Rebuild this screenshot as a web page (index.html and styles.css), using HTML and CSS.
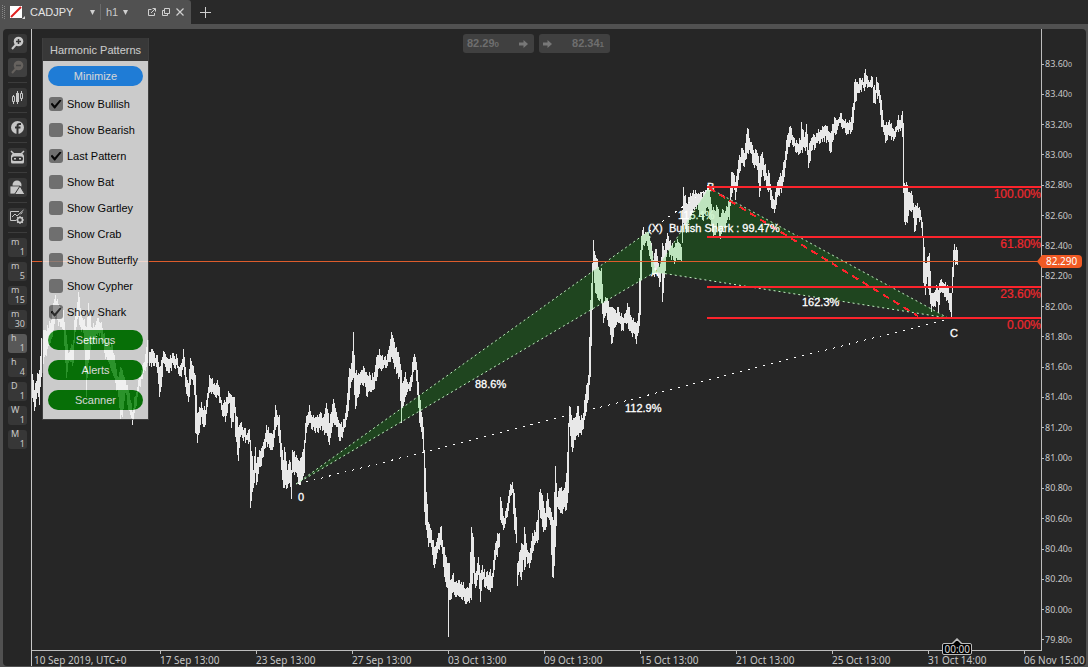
FILE: index.html
```html
<!DOCTYPE html>
<html lang="en">
<head>
<meta charset="utf-8">
<title>CADJPY h1</title>
<link rel="stylesheet" href="styles.css">
</head>
<body>
<header class="tabbar">
  <div class="tab">
    <svg class="grip" width="4" height="14" viewBox="0 0 4 14"><path d="M.5 0v14M2.5 1v14" stroke="#8a8a8a" stroke-dasharray="1 1"/></svg>
    <svg class="logo" width="16" height="16" viewBox="0 0 16 16"><path fill="#fff" d="M0 2h12v12H0z"/><path d="M1 13L11 3" stroke="#e02020" stroke-width="2"/><path fill="#ddd" d="M15 12v3h-3z"/></svg>
    <button class="pick symbol">CADJPY</button>
    <svg width="5" height="5" viewBox="0 0 5 5"><path fill="#d0d0d0" d="M0 0h5L2.5 5z"/></svg>
    <span class="tab-sep"></span>
    <button class="pick period">h1</button>
    <svg width="5" height="5" viewBox="0 0 5 5"><path fill="#d0d0d0" d="M0 0h5L2.5 5z"/></svg>
    <div class="tab-icons">
      <button class="mini" aria-label="Detach"><svg width="8" height="8" viewBox="0 0 8 8"><path fill="none" stroke="#d0d0d0" d="M3.5 1.500H.5v6h6V5M3 5l4-4M4.500.500h3v3"/></svg></button>
      <button class="mini" aria-label="Duplicate"><svg width="8" height="8" viewBox="0 0 8 8"><path fill="none" stroke="#d0d0d0" d="M2.500.5h5v5h-5zM2 2.500H.5v5h5V6"/></svg></button>
      <button class="mini" aria-label="Close"><svg width="8" height="8" viewBox="0 0 8 8"><path stroke="#d0d0d0" stroke-width="1.200" d="M.5.5l7 7M7.500.500l-7 7"/></svg></button>
    </div>
  </div>
  <button class="mini add" aria-label="New tab"><svg width="11" height="11" viewBox="0 0 11 11"><path stroke="#d0d0d0" d="M5.500 0v11M0 5.500h11"/></svg></button>
</header>

<main class="workspace">
  <nav class="tools">
    <button class="tool" aria-label="Zoom in"><svg viewBox="0 0 19 19"><circle cx="10.500" cy="7.500" r="4.800" fill="#c8c8c8"/><path stroke="#c8c8c8" stroke-width="2" d="M8 10.500L4 15"/><path stroke="#333" stroke-width="1.500" d="M8 7.500h5M10.500 5v5"/></svg></button>
    <button class="tool" disabled aria-label="Zoom out"><svg viewBox="0 0 19 19"><circle cx="10.500" cy="7.500" r="4.800" fill="#66625e"/><path stroke="#66625e" stroke-width="2" d="M8 10.500L4 15"/><path stroke="#444" stroke-width="1.500" d="M8 7.500h5"/></svg></button>
    <hr>
    <button class="tool" aria-label="Chart type"><svg viewBox="0 0 19 19"><path fill="none" stroke="#c8c8c8" d="M4.500 8.500h2v5h-2zM5.500 7v1.500M5.500 13.500V16M12.500 5.500h2v5h-2zM13.500 3v2.500M13.500 10.500V13M9.500 3v13"/><path fill="#c8c8c8" d="M8 5h3v9H8z"/></svg></button>
    <hr>
    <button class="tool" aria-label="Facebook"><svg viewBox="0 0 19 19"><circle cx="9.500" cy="9.500" r="6.500" fill="#c8c8c8"/><path fill="none" stroke="#333" stroke-width="2" d="M13 6h-1.500Q9.500 6 9.500 8v8M7 9.500h5.500"/></svg></button>
    <hr>
    <button class="tool" aria-label="Robots"><svg viewBox="0 0 19 19"><path stroke="#c8c8c8" stroke-width="1.500" d="M3 3l3 3M16 3l-3 3"/><path fill="#c8c8c8" d="M3 8q1-3 4-3h5q3 0 4 3v6q0 1.500-1.500 1.500h-10Q3 15.500 3 14z"/><rect x="4" y="8.500" width="11" height="4.500" rx="2" fill="#333"/><path fill="#c8c8c8" d="M6 10h2v1.500H6zM11 10h2v1.500h-2z"/></svg></button>
    <hr>
    <button class="tool" aria-label="Objects"><svg viewBox="0 0 19 19"><circle cx="9" cy="7" r="4.500" fill="#c8c8c8"/><path fill="#c8c8c8" stroke="#373737" stroke-width=".8" d="M2 8h10v8H2z"/><path fill="#c8c8c8" stroke="#373737" stroke-width="1" d="M12 8L17 16.500H6.500z"/></svg></button>
    <hr>
    <button class="tool" aria-label="Indicators"><svg viewBox="0 0 19 19"><path fill="none" stroke="#c8c8c8" d="M11 3.500H2.500v9H8M4 9l3-3 2 2 6.500-6M12.500 6l2-1.500"/><circle cx="12" cy="12" r="2.500" fill="none" stroke="#c8c8c8" stroke-width="1.500"/><path stroke="#c8c8c8" stroke-width="1.200" d="M12 8v1.500M12 14.500V16M8 12h1.500M14.500 12H16M9.200 9.200l1 1M13.800 13.800l1 1M14.800 9.200l-1 1M10.200 13.800l-1 1"/></svg></button>
    <hr>
    <button class="tool frame"><span>m</span><b>1</b></button>
    <button class="tool frame"><span>m</span><b>5</b></button>
    <button class="tool frame"><span>m</span><b>15</b></button>
    <button class="tool frame"><span>m</span><b>30</b></button>
    <button class="tool frame current"><span>h</span><b>1</b></button>
    <button class="tool frame"><span>h</span><b>4</b></button>
    <button class="tool frame"><span>D</span><b>1</b></button>
    <button class="tool frame"><span>W</span><b>1</b></button>
    <button class="tool frame"><span>M</span><b>1</b></button>
  </nav>

  <section class="chart">
    <div class="plot">
      <svg class="canvas" viewBox="32 29 1009 621">
        <path id="bars" class="bars"/>
        <g class="note">
          <text x="678" y="219">115.4%</text>
          <text x="651" y="276">A</text>
          <text x="707" y="191">B</text>
        </g>
        <path class="zone" d="M296 484L649 231L655 272ZM655 272L709 188L948 318Z"/>
        <path class="edge" d="M296 484L649 231M296 484L655 272M649 231L655 272M655 272L709 188L948 318M655 272L948 318"/>
        <path class="link" d="M298 484L948 319M649 231L709 188"/>
        <path class="trend" d="M709 188L918 316"/>
        <path class="level" d="M707 187H1041M707 237H1041M707 287H1041M707 318H1041"/>
        <path class="bid" d="M32 261.500H1041"/>
        <g class="ratio">
          <text x="1041" y="198">100.00%</text>
          <text x="1041" y="248">61.80%</text>
          <text x="1041" y="298">23.60%</text>
          <text x="1041" y="329">0.00%</text>
        </g>
        <g class="note">
          <text x="298" y="501">0</text>
          <text x="475" y="388">88.6%</text>
          <text x="625" y="412">112.9%</text>
          <text x="802" y="306">162.3%</text>
          <text x="950" y="337">C</text>
          <text x="648" y="232">(X)</text>
          <text x="669" y="232">Bullish Shark : 99.47%</text>
        </g>
      </svg>

      <div class="quotes">
        <button class="quote"><span>82.29<small>0</small></span><svg width="9" height="8" viewBox="0 0 9 8"><path fill="#777" d="M0 2.500h4.500V0L9 4 4.500 8V5.500H0z"/></svg></button>
        <button class="quote"><svg width="9" height="8" viewBox="0 0 9 8"><path fill="#777" d="M0 2.500h4.500V0L9 4 4.500 8V5.500H0z"/></svg><span>82.34<small>1</small></span></button>
      </div>

      <aside class="panel">
        <h2>Harmonic Patterns</h2>
        <div class="panel-body">
          <button class="pill blue">Minimize</button>
          <div class="options">
            <label><input type="checkbox" checked>Show Bullish</label>
            <label><input type="checkbox">Show Bearish</label>
            <label><input type="checkbox" checked>Last Pattern</label>
            <label><input type="checkbox">Show Bat</label>
            <label><input type="checkbox">Show Gartley</label>
            <label><input type="checkbox">Show Crab</label>
            <label><input type="checkbox">Show Butterfly</label>
            <label><input type="checkbox">Show Cypher</label>
            <label><input type="checkbox" checked>Show Shark</label>
          </div>
          <div class="actions">
            <button class="pill">Settings</button>
            <button class="pill">Alerts</button>
            <button class="pill">Scanner</button>
          </div>
        </div>
      </aside>
      <div class="clock">
        <svg width="14" height="6" viewBox="0 0 14 6"><path fill="#000" stroke="#bdbdbd" stroke-width="1.500" d="M0 6h2l5-5 5 5h2"/></svg>
        <span>00:00</span>
      </div>
    </div>

    <div class="prices">
      <span>83.60<small>0</small></span><span>83.40<small>0</small></span><span>83.20<small>0</small></span><span>83.00<small>0</small></span><span>82.80<small>0</small></span><span>82.60<small>0</small></span><span>82.40<small>0</small></span><span>82.20<small>0</small></span><span>82.00<small>0</small></span><span>81.80<small>0</small></span><span>81.60<small>0</small></span><span>81.40<small>0</small></span><span>81.20<small>0</small></span><span>81.00<small>0</small></span><span>80.80<small>0</small></span><span>80.60<small>0</small></span><span>80.40<small>0</small></span><span>80.20<small>0</small></span><span>80.00<small>0</small></span><span>79.80<small>0</small></span>
      <strong class="last">82.290</strong>
    </div>

    <div class="times">
      <span>10 Sep 2019, UTC+0</span><span>17 Sep 13:00</span><span>23 Sep 13:00</span><span>27 Sep 13:00</span><span>03 Oct 13:00</span><span>09 Oct 13:00</span><span>15 Oct 13:00</span><span>21 Oct 13:00</span><span>25 Oct 13:00</span><span>31 Oct 14:00</span><span>06 Nov 15:00</span>
    </div>
  </section>
</main>
<script src="chart.js"></script>
</body>
</html>
```
FILE: styles.css
```css
* { box-sizing: border-box; }

body {
  margin: 0;
  min-height: 100vh;
  display: flex;
  flex-direction: column;
  background: #515151;
  color: #c8c8c8;
  font: 11px/13px "Liberation Sans", Arial, sans-serif;
  overflow: hidden;
}

button {
  border: 0;
  padding: 0;
  background: none;
  color: inherit;
  font: inherit;
}

svg { display: block; flex: none; }

.tabbar {
  display: flex;
  align-items: center;
  height: 24px;
  margin-bottom: 5px;
  background: #292929;
}

.tab {
  display: flex;
  align-items: center;
  width: 191px;
  height: 24px;
  padding-left: 2px;
  background: #515151;
  border-radius: 0 3px 0 0;
}

.logo { margin: 0 4px; }
.symbol { width: 60px; text-align: left; color: #e4e4e4; }
.tab-sep { width: 1px; height: 16px; margin: 0 5px; background: #6a6a6a; }
.period { width: 17px; text-align: left; }
.tab-icons { display: flex; gap: 6px; margin-left: 20px; }
.mini { display: block; }
.add { margin-left: 9px; }

.workspace {
  flex: 1;
  display: grid;
  grid-template-columns: 28px minmax(0, 1fr);
  margin: 0 2px 1px 3px;
  background: #262626;
  border-radius: 4px;
}

.tools {
  display: flex;
  flex-direction: column;
  align-items: flex-start;
  gap: 5px;
  padding: 5px 0 0 5px;
}

.tools hr {
  width: 19px;
  height: 1px;
  margin: 0;
  border: 0;
  background: #3c3c3c;
}

.tool {
  width: 19px;
  height: 19px;
  border-radius: 3px;
  background: #373737;
}

.tool:disabled { background: #404040; }

.frame {
  display: flex;
  flex-direction: column;
  justify-content: space-between;
  padding: 0 2px 1px 3px;
  font: 9px/8px "Noto Sans", sans-serif;
}

.frame span { align-self: flex-start; }
.frame b { align-self: flex-end; font-weight: 400; }
.current { background: #585858; }

.chart {
  display: grid;
  grid-template-columns: minmax(0, 1fr) 44px;
  grid-template-rows: auto 1fr;
  border-left: 1px solid #c8c8c8;
}

.plot {
  position: relative;
  border-right: 1px solid #bdbdbd;
  border-bottom: 1px solid #bdbdbd;
}

.canvas { width: 100%; height: auto; }

.bars { stroke: #e8e8e8; fill: none; shape-rendering: crispEdges; }
.zone { fill: #00d000; fill-opacity: .18; }
.edge { fill: none; stroke: #c4f4c4; stroke-dasharray: 2 3; }
.link { fill: none; stroke: #fff; stroke-dasharray: 2 6; shape-rendering: crispEdges; }
.trend { stroke: #fc242c; stroke-width: 2; stroke-dasharray: 7 5; shape-rendering: crispEdges; }
.level { stroke: #fc242c; stroke-width: 2; }
.bid { stroke: #dd5c2c; }
.note { fill: #fff; stroke: #fff; stroke-width: .3; }
.ratio { fill: #f0262e; stroke: #f0262e; stroke-width: .2; font-size: 12px; text-anchor: end; }

.quotes {
  position: absolute;
  top: 5px;
  left: 0;
  right: 0;
  display: flex;
  justify-content: center;
  gap: 5px;
}

.quote {
  display: flex;
  align-items: center;
  justify-content: space-between;
  width: 71px;
  height: 19px;
  padding: 0 6px 0 4px;
  border-radius: 3px;
  background: #404040;
  color: #6e6e6e;
  font-weight: 700;
}

.quote small { font-size: 8px; }

.panel {
  position: absolute;
  top: 9px;
  left: 10px;
  width: 107px;
  border: 1px solid #454545;
  border-top: 0;
  color: #000;
  opacity: .81;
}

.panel h2 {
  margin: 0;
  height: 23px;
  background: #3d3d3d;
  color: #f2f2f2;
  font: 11px/24px "Liberation Sans", Arial, sans-serif;
  text-align: center;
}

.panel-body { padding: 5px 5px 9px; background: #f2f2f2; }

.pill {
  width: 100%;
  height: 20px;
  border-radius: 10px;
  background: #008000;
  color: #fff;
}

.blue { background: #1e90ff; }

.options { display: flex; flex-direction: column; gap: 12px; padding: 11px 1px; }

.options label { display: flex; align-items: center; gap: 4px; height: 14px; white-space: nowrap; }

.options input {
  appearance: none;
  display: grid;
  place-items: center;
  width: 14px;
  height: 14px;
  margin: 0;
  border-radius: 3px;
  background: #808080;
}

.options input:checked::before {
  content: "";
  width: 11px;
  height: 9px;
  background: #000;
  clip-path: polygon(0 50%, 15% 36%, 38% 66%, 86% 0, 100% 10%, 42% 100%, 34% 100%);
}

.actions { display: flex; flex-direction: column; gap: 10px; }

.clock {
  position: absolute;
  bottom: -5px;
  left: 91.700%;
  display: flex;
  flex-direction: column;
  align-items: center;
  transform: translateX(-50%);
}

.clock svg { position: relative; z-index: 1; margin-bottom: -1px; }

.clock span {
  width: 30px;
  border: 1px solid #bdbdbd;
  border-radius: 2px;
  background: #000;
  color: #d8d8d8;
  font: 10px/10px "Noto Sans", sans-serif;
  text-align: center;
}

.prices {
  position: relative;
  display: flex;
  flex-direction: column;
  justify-content: space-between;
  padding: 28px 0 4px;
  font: 9px/13px "Noto Sans", sans-serif;
}

.prices span { display: flex; align-items: baseline; }
.prices span::before { content: ""; width: 2px; height: 1px; margin-right: 1px; background: #bdbdbd; align-self: center; }
.prices small { font-size: 7px; }

.last {
  position: absolute;
  top: 226px;
  left: -5px;
  width: 45px;
  padding-left: 9px;
  background: #f15a24;
  color: #fff;
  font: 10px/13px "Noto Sans", sans-serif;
  border-radius: 0 4px 4px 0;
  clip-path: polygon(0 50%, 5px 0, 100% 0, 100% 100%, 5px 100%);
}

.times {
  grid-column: 1 / -1;
  display: grid;
  grid-template-columns: minmax(0, 128fr) repeat(9, minmax(0, 96fr)) minmax(0, 62fr);
  font: 10px/11px "Noto Sans", sans-serif;
  white-space: nowrap;
}

.times span {
  padding-top: 4px;
  background: linear-gradient(#bdbdbd, #bdbdbd) 0 0 / 1px 3px no-repeat;
}

.times span:first-child { padding-left: 2px; background: none; }
```
FILE: chart.js
```js
// Price bars as "x high low" in canvas units; columns between entries are interpolated.
const samples = `32 374 398,34 390 411,37 373 393,39 370 405,41 338 377,44 330 357,50 323 343,53 303 330,55 295 317,
60 308 327,63 310 330,66 335 378,68 353 363,73 340 363,74 320 343,76 310 327,78 292 317,80 308 327,83 320 333,86 327 397,
88 303 363,91 327 343,94 327 340,98 318 333,102 328 340,104 333 353,107 343 360,112 345 373,115 363 383,118 377 397,
120 367 419,122 370 417,125 380 393,128 390 410,131 403 418,132 412 425,134 397 413,137 387 397,140 377 387,143 363 373,
146 347 367,148 340 363,149 352 366,153 351 366,156 355 367,159 367 397,162 357 377,163 351 363,167 358 371,173 353 365,
177 358 368,179 367 376,181 363 377,183 349 367,185 367 387,187 380 396,188 383 402,190 358 385,192 365 380,194 373 395,
195 375 433,197 413 443,199 407 433,201 402 417,203 410 427,205 410 425,207 393 407,209 375 393,212 378 392,214 383 395,
217 380 395,219 387 403,221 400 410,223 403 417,225 402 422,227 397 413,229 393 403,231 395 428,234 397 413,235 407 437,
238 427 461,240 423 437,243 430 441,247 433 440,249 429 442,250 440 508,253 470 488,255 447 473,256 463 485,259 450 467,
263 442 457,266 425 442,269 433 448,273 430 447,275 405 430,277 415 425,279 415 443,281 443 470,283 460 488,284 447 488,
287 470 488,289 460 483,291 470 499,292 450 473,295 457 472,298 460 483,301 457 481,304 440 473,305 423 443,307 415 427,
309 405 423,312 417 430,317 415 432,320 412 430,323 417 430,326 403 433,329 423 445,333 399 423,337 417 427,339 423 441,
342 427 438,345 413 427,347 393 417,349 368 400,351 363 382,353 332 378,355 373 409,358 373 397,361 370 383,364 368 383,
367 375 397,370 375 392,373 377 390,377 355 377,379 349 368,383 360 368,386 360 368,388 350 362,391 332 357,393 338 363,
397 352 373,399 357 377,401 370 423,402 383 408,405 372 397,407 382 392,411 375 387,413 357 372,415 357 370,417 370 395,
419 395 423,421 412 432,423 427 453,424 450 512,426 492 530,428 522 547,430 528 543,432 540 555,434 547 568,437 538 553,
439 533 550,441 526 547,443 547 567,446 557 587,447 563 588,448 563 637,449 563 600,450 580 600,452 575 593,457 583 595,
462 585 600,467 587 602,469 583 603,471 527 600,473 537 573,475 573 588,478 557 575,480 573 602,482 565 580,485 577 588,
489 572 590,492 573 588,493 560 577,495 543 560,497 533 557,499 533 547,500 497 520,502 508 525,504 518 528,507 503 517,
509 490 503,511 485 495,512 482 493,514 493 530,516 517 543,517 563 586,519 552 572,521 543 580,523 545 560,524 527 570,
526 543 557,529 553 568,532 533 553,535 532 543,538 510 540,539 492 510,542 495 527,545 513 530,547 493 517,550 508 525,
552 517 577,553 520 578,555 466 547,557 497 507,561 487 513,564 488 507,566 473 510,568 423 493,569 406 427,572 420 452,
575 417 440,578 406 437,580 420 433,582 418 430,584 400 420,586 385 412,588 375 400,590 300 377,592 263 310,593 240 270,
595 255 293,598 267 300,601 268 303,603 303 323,606 298 313,609 307 327,611 307 344,615 310 327,618 307 323,622 317 330,
625 313 323,627 303 323,631 317 333,633 318 333,636 323 344,638 313 333,640 250 315,642 230 250,645 232 243,648 232 250,
651 243 267,653 260 275,656 249 270,659 267 287,661 257 273,662 243 302,664 250 278,667 233 250,670 240 255,673 248 260,
675 243 262,678 242 260,681 247 261,682 210 243,683 187 223,686 203 233,688 197 223,692 193 213,695 190 207,698 193 210,
702 197 220,705 190 213,707 185 207,710 197 220,712 210 232,714 210 235,717 207 223,720 217 239,723 210 227,727 207 220,
729 200 220,731 172 197,733 173 187,735 182 200,738 160 180,742 148 163,744 153 167,747 128 153,750 142 153,753 150 165,
757 153 170,759 163 197,762 152 170,766 173 187,769 173 190,771 190 208,774 200 213,776 187 205,778 180 195,782 170 188,
784 160 177,786 140 160,788 133 147,791 128 140,793 137 147,797 143 152,800 140 153,801 122 150,804 137 148,806 124 147,
808 150 168,812 137 150,817 133 143,820 130 143,823 127 138,827 126 140,830 133 153,834 117 133,837 120 130,840 113 123,
843 120 128,848 123 134,851 117 132,853 103 123,854 82 110,857 82 93,860 78 90,863 82 88,865 69 87,868 80 87,872 77 87,
873 87 103,875 90 104,876 77 93,879 90 103,881 100 127,883 120 132,885 125 143,888 122 135,892 128 137,895 127 137,
897 120 130,901 115 128,902 111 137,903 123 193,904 183 222,907 185 223,909 192 210,912 195 210,914 207 232,917 203 218,
920 210 220,922 222 238,923 237 283,925 263 295,927 257 277,929 253 295,931 293 312,933 293 307,937 288 302,938 290 313,
940 280 293,943 283 293,945 282 297,948 287 303,949 293 310,951 293 318,952 267 293,953 250 277,954 244 260,957 250 265`
  .split(",").map(s => s.trim().split(" ").map(Number));

let seed = 7;
const wobble = () => {
  seed = (seed * 16807) % 2147483647;
  return seed / 2147483647 - 0.5;
};

let d = "";
samples.forEach(([x, hi, lo], i) => {
  const next = samples[i + 1] || [x + 1, hi, lo];
  const steps = next[0] - x;
  for (let k = 0; k < steps; k++) {
    const t = k / steps;
    const j = k ? 8 : 0;
    const top = Math.round(hi + (next[1] - hi) * t + wobble() * j);
    const end = Math.round(lo + (next[2] - lo) * t + wobble() * j);
    d += `M${x + k + 0.5} ${top}V${Math.max(end, top + 5)}`;
  }
});
document.getElementById("bars").setAttribute("d", d);
```
